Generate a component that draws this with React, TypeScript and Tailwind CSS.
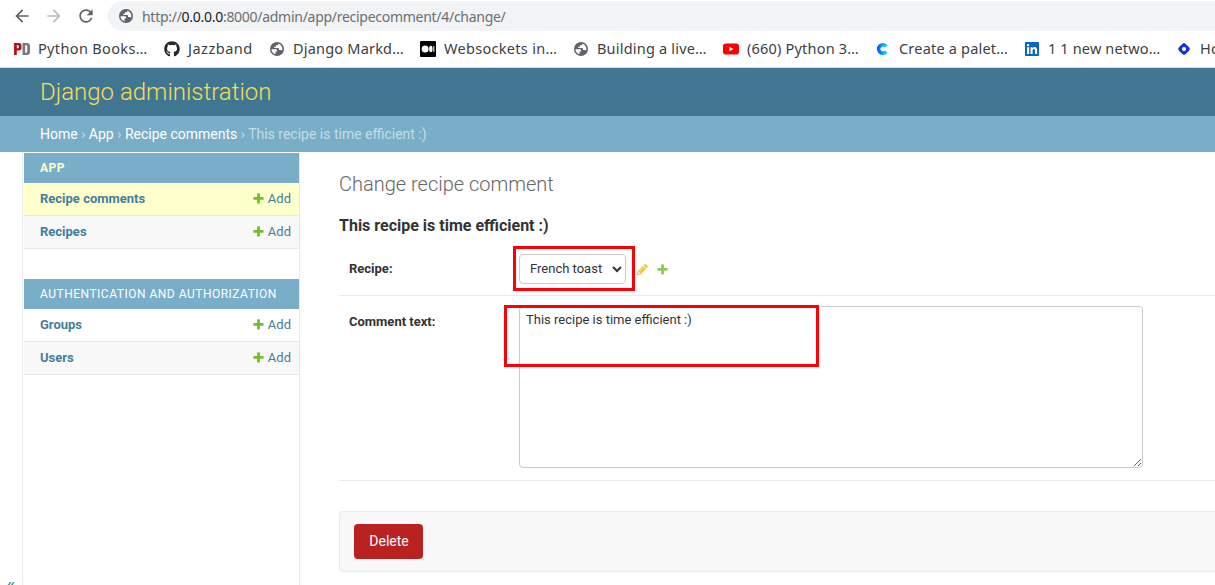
import React from "react";
import { MdArrowBack, MdArrowForward, MdRefresh } from "react-icons/md";
import { FaGithub } from "react-icons/fa";

const PLUS =
  "M1600 796v192q0 40-28 68t-68 28h-416v416q0 40-28 68t-68 28h-192q-40 0-68-28t-28-68v-416h-416q-40 0-68-28t-28-68v-192q0-40 28-68t68-28h416v-416q0-40 28-68t68-28h192q40 0 68 28t28 68v416h416q40 0 68 28t28 68z";
const PENCIL =
  "M491 1536l91-91-235-235-91 91v107h128v128h107zm523-928q0-22-22-22-10 0-17 7l-542 542q-7 7-7 17 0 22 22 22 10 0 17-7l542-542q7-7 7-17zm-54-192l416 416-832 832h-416v-416zm683 96q0 53-37 90l-166 166-416-416 166-165q36-38 90-38 53 0 91 38l235 234q37 39 37 91z";

function Glyph({ d, fill, className }: { d: string; fill: string; className: string }) {
  return (
    <svg viewBox="0 0 1792 1792" className={className}>
      <path d={d} fill={fill} />
    </svg>
  );
}

function Globe() {
  return (
    <svg viewBox="0 0 16 16" className="size-4">
      <circle cx="8" cy="8" r="7" fill="#5f6368" />
      <path
        d="M9.600 2.800L8.800 4.300H6.900v1.500H5.300v1.300h3.700c.6 0 1 .4 1 1v1h1.700c.6 0 1 .4 1.300.9A5.500 5.500 0 0 0 9.600 2.800z"
        fill="#fff"
      />
      <path d="M2.500 8.200h4.200c.8 0 1.400.5 1.400 1.300v1H6.500v2.800A5.500 5.500 0 0 1 2.500 8.200z" fill="#fff" />
    </svg>
  );
}

const pd = (
  <svg viewBox="0 0 16 16" className="size-4">
    <path fillRule="evenodd" fill="#b5121b" d="M0 2h5q2.500 0 2.500 2.500v2.500q0 2.500-2.500 2.500H2.800V14H0zM2.800 4.300v3h1.200q.8 0 .8-.8V5.100q0-.8-.8-.8z" />
    <path fillRule="evenodd" fill="#77797c" d="M8.500 2H13q3 0 3 3v6q0 3-3 3H8.500zM11.200 4.300v7.400h1q1 0 1-1V5.300q0-1-1-1z" />
  </svg>
);
const medium = (
  <svg viewBox="0 0 16 16" className="size-4">
    <rect width="16" height="16" rx="1" fill="#000" />
    <circle cx="5.100" cy="8" r="3.500" fill="#fff" />
    <ellipse cx="10.800" cy="8" rx="1.700" ry="3.300" fill="#fff" />
    <rect x="13.200" y="5" width="1.200" height="6" rx=".5" fill="#ddd" />
  </svg>
);
const youtube = (
  <svg viewBox="0 0 16 16" className="size-4">
    <rect y="2.400" width="16" height="11.200" rx="2.800" fill="#f00" />
    <path d="M6.400 5.700v4.600L10.400 8z" fill="#fff" />
  </svg>
);
const coolors = (
  <svg viewBox="0 0 16 16" className="size-4">
    <defs>
      <linearGradient id="cg" x1="0" x2="1" y1="0" y2="0">
        <stop offset="0" stopColor="#0066ff" />
        <stop offset="1" stopColor="#00d9ff" />
      </linearGradient>
    </defs>
    <path d="M11.300 5.300A4.300 4.300 0 1 0 11.300 10.700" stroke="url(#cg)" strokeWidth="3.500" fill="none" />
  </svg>
);
const linkedin = (
  <svg viewBox="0 0 16 16" className="size-4">
    <rect x="1" y="1" width="14" height="14" rx="1" fill="#0a66c2" />
    <path d="M3 6.300h2.100V13H3zM6.500 6.300h2v.9q.7-1.100 2.100-1.100 2.500 0 2.500 3V13H11V9.500q0-1.600-1.200-1.600T8.600 9.600V13H6.500z" fill="#fff" />
    <circle cx="4.050" cy="4.100" r="1.200" fill="#fff" />
  </svg>
);
const hashnode = (
  <svg viewBox="0 0 16 16" className="size-4">
    <path fillRule="evenodd" fill="#1136e0" d="M2.900 6.300 6.300 2.900q1.700-1.600 3.400 0l3.400 3.400q1.600 1.700 0 3.400l-3.400 3.400q-1.700 1.600-3.400 0L2.900 9.700q-1.600-1.700 0-3.400zM8 5.900a2.100 2.100 0 1 0 0 4.200 2.100 2.100 0 1 0 0-4.200z" />
  </svg>
);

const bookmarks = [
  { icon: pd, text: "Python Books…", box: "w-[150px]", track: "tracking-[0.35px]" },
  { icon: <FaGithub className="size-4 text-[#24292f]" />, text: "Jazzband", box: "w-[105px]", track: "tracking-[0.5px]" },
  { icon: <Globe />, text: "Django Markd…", box: "w-[151px]", track: "tracking-[0.2px]" },
  { icon: medium, text: "Websockets in…", box: "w-[153px]", track: "tracking-[0.3px]" },
  { icon: <Globe />, text: "Building a live…", box: "w-[150px]", track: "tracking-[0.2px]" },
  { icon: youtube, text: "(660) Python 3…", box: "w-[152px]", track: "tracking-[0.2px]" },
  { icon: coolors, text: "Create a palet…", box: "w-[149px]", track: "tracking-[0.2px]" },
  { icon: linkedin, text: "1 1 new netwo…", box: "w-[152px]", track: "tracking-[0.15px]" },
  { icon: hashnode, text: "Ho", box: "w-[150px]", track: "tracking-[0.2px]" },
];

function Browser() {
  return (
    <div className="h-[68px] border-b border-[#dadce0] font-['Noto_Sans',sans-serif]">
      <div className="flex h-8 items-center pt-px pb-px">
        <MdArrowBack className="ml-3 size-5 shrink-0 text-[#5f6368]" />
        <MdArrowForward className="ml-3 size-5 shrink-0 text-[#babcbe]" />
        <MdRefresh className="ml-3 size-5 shrink-0 text-[#5f6368]" />
        <div className="ml-3 flex h-[30px] flex-1 items-center rounded-l-full bg-[#f1f3f4] pl-[10px] text-[14px] text-[#6b6f73]">
          <Globe />
          <span className="ml-2 tracking-[-0.28px] whitespace-nowrap">
            http://<span className="text-[#202124]">0.0.0.0</span>:8000/admin/app/recipecomment/4/change/
          </span>
        </div>
      </div>
      <div className="flex h-[34px] items-center pl-[14px] text-[14.5px] text-[#3c4043]">
        {bookmarks.map((b) => (
          <div key={b.text} className={`flex shrink-0 items-center gap-2 whitespace-nowrap ${b.box} ${b.track}`}>
            <span className="size-4 shrink-0">{b.icon}</span>
            <span>{b.text}</span>
          </div>
        ))}
      </div>
    </div>
  );
}

function ModelRow({ name, bg }: { name: string; bg: string }) {
  return (
    <div className={`flex h-[33px] items-center border-b border-[#e8e8e8] pr-2 pl-4 text-[13px] text-[#447e9b] ${bg}`}>
      <span className="flex-1 font-bold">{name}</span>
      <Glyph d={PLUS} fill="#70bf2b" className="mr-[3px] mb-px size-[13px]" />
      <span>Add</span>
    </div>
  );
}

function Sidebar() {
  return (
    <nav className="w-[278px] shrink-0 border-x border-[#eaeaea] pt-px pl-px">
      <div className="flex h-[30px] items-center bg-[#79aec8] pl-4 text-[12px] font-bold tracking-[0.5px] text-[#ffffcc]">APP</div>
      <ModelRow name="Recipe comments" bg="bg-[#ffffcc]" />
      <ModelRow name="Recipes" bg="bg-[#f8f8f8]" />
      <div className="mt-[30px] flex h-[30px] items-center bg-[#79aec8] pl-4 text-[12px] tracking-[0.5px] text-white">
        AUTHENTICATION AND AUTHORIZATION
      </div>
      <ModelRow name="Groups" bg="bg-white" />
      <ModelRow name="Users" bg="bg-[#f8f8f8]" />
    </nav>
  );
}

export default function App() {
  return (
    <div className="flex h-[585px] w-[1215px] flex-col overflow-hidden bg-white font-[Roboto,sans-serif] text-[#333]">
      <Browser />
      <header className="flex h-12 shrink-0 items-center bg-[#417690] pl-10 text-[24px] font-light text-[#f5dd5d]">Django administration</header>
      <div className="h-9 shrink-0 bg-[#79aec8] pl-10 text-[14px] leading-9 text-[#c4dce8]">
        <span className="text-white">Home</span> › <span className="text-white">App</span> ›{" "}
        <span className="text-white">Recipe comments</span> › This recipe is time efficient :)
      </div>
      <div className="flex min-h-0 flex-1">
        <div className="flex w-[22px] shrink-0 flex-col justify-end overflow-hidden pl-[6px] text-[20px] leading-[20px] text-[#447e9b]">
          <span className="-mb-[10px]">«</span>
        </div>
        <Sidebar />
        <main className="min-w-0 flex-1 pt-5 pl-[39px]">
          <h1 className="text-[20px] leading-6 font-light text-[#666]">Change recipe comment</h1>
          <h2 className="mt-5 text-[16px] leading-5 font-bold">This recipe is time efficient :)</h2>
          <div className="mt-[7px] flex h-[53px] items-center border-b border-[#eaeaea] pl-[10px] text-[13px]">
            <label className="w-[170px] shrink-0 font-bold">Recipe:</label>
            <div className="relative mb-px">
              <select className="block h-[30px] w-[107px] rounded border border-[#ccc] bg-white px-[6px] text-[13px]">
                <option>French toast</option>
              </select>
              <div className="absolute top-[-7.5px] left-[-6.500px] h-[45px] w-[122px] border-[3px] border-[#fb0007]" />
            </div>
            <Glyph d={PENCIL} fill="#efb80b" className="ml-[10px] size-[13px] opacity-80" />
            <Glyph d={PLUS} fill="#70bf2b" className="ml-[7px] size-[13px] opacity-80" />
          </div>
          <div className="flex h-[185px] border-b border-[#eaeaea] pt-[10px] pl-[10px] text-[13px]">
            <label className="w-[170px] shrink-0 pt-2 leading-4 font-bold">Comment text:</label>
            <div className="relative">
              <textarea
                className="block h-[162px] w-[624px] resize rounded border border-[#ccc] px-[6px] py-[5px] text-[13px] leading-[15px]"
                defaultValue="This recipe is time efficient :)"
              />
              <div className="absolute top-[-1px] left-[-15px] h-[62px] w-[315px] border-[3px] border-[#fb0007]" />
            </div>
          </div>
          <div className="mt-[30px] h-[61px] rounded-l border border-r-0 border-[#eaeaea] bg-[#f8f8f8] py-3 pl-[14px]">
            <button className="block h-[35px] w-[69px] rounded bg-[#ba2121] pl-px text-[14px] text-white">Delete</button>
          </div>
        </main>
      </div>
    </div>
  );
}
